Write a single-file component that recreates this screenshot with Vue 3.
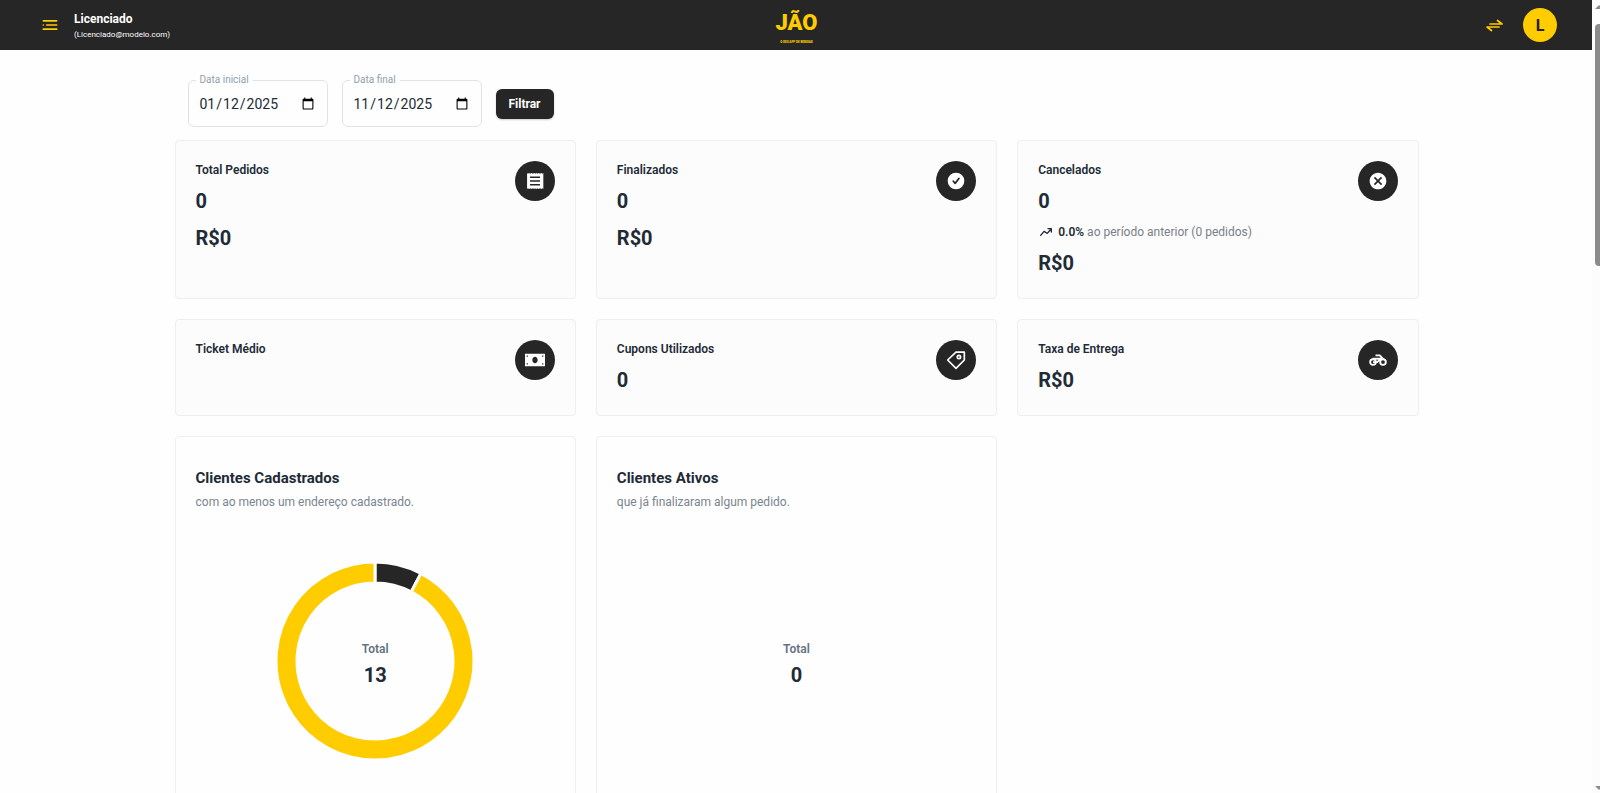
<script setup>
import { ref } from 'vue';

const startDate = ref('2025-01-12');
const endDate = ref('2025-11-12');

const stats = [
    { title: 'Total Pedidos', count: '0', amount: 'R$0', icon: 'receipt' },
    { title: 'Finalizados', count: '0', amount: 'R$0', icon: 'check' },
    { title: 'Cancelados', count: '0', trend: '0.0%', trendText: 'ao período anterior (0 pedidos)', amount: 'R$0', icon: 'cancel' },
    { title: 'Ticket Médio', icon: 'money' },
    { title: 'Cupons Utilizados', count: '0', icon: 'tag' },
    { title: 'Taxa de Entrega', amount: 'R$0', icon: 'bike' }
];

const charts = [
    { title: 'Clientes Cadastrados', subtitle: 'com ao menos um endereço cadastrado.', series: [{ value: 1, color: '#262626' }, { value: 12, color: '#ffcc00' }] },
    { title: 'Clientes Ativos', subtitle: 'que já finalizaram algum pedido.', series: [] }
];

const total = (series) => series.reduce((sum, item) => sum + item.value, 0);

const point = (radius, angle) => `${100 + radius * Math.sin(angle)} ${100 - radius * Math.cos(angle)}`;

// donut slices, clockwise from the top
const slices = (series) => {
    const sum = total(series);
    let angle = 0;
    return series.map((item) => {
        const start = angle;
        const end = start + (item.value / sum) * Math.PI * 2;
        const large = end - start > Math.PI ? 1 : 0;
        angle = end;
        return {
            color: item.color,
            d: `M${point(99, start)} A99 99 0 ${large} 1 ${point(99, end)} L${point(78, end)} A78 78 0 ${large} 0 ${point(78, start)} Z`
        };
    });
};
</script>

<template>
    <div class="app">
        <header class="topbar">
            <div class="account">
                <button class="icon-button" type="button" aria-label="Menu">
                    <svg width="20" height="20" viewBox="0 0 24 24" fill="currentColor">
                        <circle cx="4" cy="12" r="1" />
                        <rect x="7" y="11" width="14" height="2" rx="1" />
                        <rect x="3" y="16" width="18" height="2" rx="1" />
                        <rect x="3" y="6" width="18" height="2" rx="1" />
                    </svg>
                </button>
                <div>
                    <div class="name">Licenciado</div>
                    <div class="email">(Licenciado@modelo.com)</div>
                </div>
            </div>
            <div class="logo">
                <span class="logo-name">JÃO</span>
                <span class="logo-tag">O SEU APP DE BEBIDAS</span>
            </div>
            <div class="actions">
                <button class="icon-button" type="button" aria-label="Trocar">
                    <svg width="20" height="20" viewBox="0 0 20 20" fill="none" stroke="currentColor" stroke-width="1.7" stroke-linecap="round" stroke-linejoin="round">
                        <path d="M5 9h12l-4.500-3.500" />
                        <path d="M14 12H2l4.500 3.500" />
                    </svg>
                </button>
                <button class="avatar" type="button">L</button>
            </div>
        </header>

        <main class="content">
            <form class="filters" @submit.prevent>
                <div class="field">
                    <label for="start">Data inicial</label>
                    <input id="start" v-model="startDate" type="date">
                </div>
                <div class="field">
                    <label for="end">Data final</label>
                    <input id="end" v-model="endDate" type="date">
                </div>
                <button class="filter-button" type="submit">Filtrar</button>
            </form>

            <div class="grid">
                <section v-for="stat in stats" :key="stat.title" class="card">
                    <div class="stat">
                        <h2 class="stat-title">{{ stat.title }}</h2>
                        <div v-if="stat.count" class="value">{{ stat.count }}</div>
                        <div v-if="stat.trend" class="trend">
                            <svg width="16" height="16" viewBox="0 0 24 24" fill="currentColor">
                                <path d="M21 7a1 1 0 0 0-1-1h-5a1 1 0 0 0 0 2h2.83l-4 4.71-4.32-2.57a1 1 0 0 0-1.28.22l-5 6a1 1 0 0 0 .13 1.41A1 1 0 0 0 4 18a1 1 0 0 0 .77-.36l4.45-5.34 4.27 2.56a1 1 0 0 0 1.27-.21L19 9.7V12a1 1 0 0 0 2 0V7z" />
                            </svg>
                            <span><strong>{{ stat.trend }}</strong> {{ stat.trendText }}</span>
                        </div>
                        <div v-if="stat.amount" class="value">{{ stat.amount }}</div>
                    </div>
                    <div class="badge">
                        <svg width="20" height="20" viewBox="0 0 24 24" fill="currentColor">
                            <path v-if="stat.icon === 'receipt'" d="M18 17.500H6v-2h12v2zm0-4.500H6v-2h12v2zm0-4.500H6v-2h12v2zM2.500 21.500l1-.7 1.500.7 1.500-.7 1.500.7 1.500-.7 1.500.7 1-.7 1.500.7 1.500-.7 1.500.7 1.500-.7 1.500.7 1.500-.7 1 .7V2.500l-1 .7-1.500-.7-1.500.7-1.500-.7-1.500.7-1.500-.7-1 .7-1.500-.7-1.500.7-1.500-.7-1.500.7-1.500-.7-1.500.7-1-.7z" />
                            <path v-else-if="stat.icon === 'check'" fill-rule="evenodd" d="M12 2a10 10 0 1 0 0 20 10 10 0 0 0 0-20zm4.3 7.6-4.6 6a1 1 0 0 1-1.5 0l-2.4-2.9a1 1 0 0 1 1.5-1.3l1.6 1.9 3.8-5a1 1 0 0 1 1.6 1.3z" />
                            <path v-else-if="stat.icon === 'cancel'" d="M12 2C6.47 2 2 6.47 2 12s4.47 10 10 10 10-4.47 10-10S17.53 2 12 2zm5 13.59L15.59 17 12 13.41 8.41 17 7 15.59 10.59 12 7 8.41 8.41 7 12 10.59 15.59 7 17 8.41 13.41 12 17 15.59z" />
                            <path v-else-if="stat.icon === 'money'" fill-rule="evenodd" d="M0 4.500h24v15H0zM12 8c-1.800 0-3.200 1.800-3.200 4s1.400 4 3.200 4 3.200-1.800 3.200-4-1.400-4-3.200-4zM2 6.500V8h1.500V6.500zM20.500 6.500V8H22V6.500zM2 16v1.500h1.500V16zM20.500 16v1.500H22V16z" />
                            <g v-else-if="stat.icon === 'tag'" fill="none" stroke="currentColor" stroke-width="2">
                                <path d="M12 2.500h10V12L12 22 2 12z" stroke-linejoin="round" />
                                <circle cx="15.500" cy="8.500" r="2" />
                            </g>
                            <g v-else fill="none" stroke="currentColor" stroke-width="2.200">
                                <circle cx="6" cy="14.500" r="3.400" />
                                <circle cx="18" cy="14.500" r="3.400" />
                                <path d="M9 6.500h5l4.500 4.500M5.500 10.500h10L11 14.500H6" />
                            </g>
                        </svg>
                    </div>
                </section>

                <section v-for="chart in charts" :key="chart.title" class="card chart-card">
                    <h2 class="chart-title">{{ chart.title }}</h2>
                    <p class="chart-subtitle">{{ chart.subtitle }}</p>
                    <div class="donut">
                        <svg width="200" height="200" viewBox="0 0 200 200">
                            <path v-for="slice in slices(chart.series)" :key="slice.color" :d="slice.d" :fill="slice.color" stroke="#fefefe" stroke-width="3" />
                        </svg>
                        <div class="donut-label">
                            <span class="donut-text">Total</span>
                            <span class="value">{{ total(chart.series) }}</span>
                        </div>
                    </div>
                </section>
            </div>
        </main>

        <div class="scrollbar">
            <svg width="8" height="24" viewBox="0 0 8 24" fill="#8b8b8b"><path d="M3 9h8L7 5z" /></svg>
            <div class="thumb"></div>
            <svg class="down" width="8" height="12" viewBox="0 0 8 12" fill="#8b8b8b"><path d="M3 5h8L7 9z" /></svg>
        </div>
    </div>
</template>

<style>
body {
    margin: 0;
    background: #fefefe;
}
</style>

<style scoped>
.app {
    box-sizing: border-box;
    height: 100vh;
    padding-right: 7px;
    overflow: hidden;
    color: #212b36;
    font-family: Roboto, sans-serif;
    font-size: 12px;
    line-height: 18px;
}

.topbar {
    display: grid;
    grid-template-columns: 1fr auto 1fr;
    align-items: center;
    height: 50px;
    padding: 0 36px;
    background: #262626;
    color: #fff;
}

.account,
.actions {
    display: flex;
    align-items: center;
}

.account {
    gap: 14px;
    padding-left: 4px;
}

.actions {
    justify-content: flex-end;
    gap: 18px;
}

.icon-button {
    display: flex;
    padding: 0;
    border: 0;
    background: none;
    color: #ffcc00;
}

.name {
    padding-top: 2px;
    font-weight: bold;
    line-height: 18px;
}

.email {
    font-size: 8px;
    line-height: 14px;
}

.logo {
    display: flex;
    flex-direction: column;
    align-items: center;
    color: #ffcc00;
    font-weight: 900;
}

.logo-name {
    font-family: "Liberation Sans Narrow", Roboto, sans-serif;
    font-size: 22px;
    line-height: 34px;
}

.logo-tag {
    font-size: 3px;
    line-height: 4px;
}

.avatar {
    width: 34px;
    height: 34px;
    padding: 0;
    border: 0;
    border-radius: 50%;
    background: #ffcc00;
    color: #212121;
    font-family: inherit;
    font-size: 16px;
    font-weight: bold;
}

.content {
    max-width: 1244px;
    margin: 0 auto;
    padding-top: 30px;
}

.filters {
    display: flex;
    align-items: center;
    gap: 14px;
    padding: 0 13px;
    margin-bottom: 13px;
}

.field {
    position: relative;
}

.field label {
    position: absolute;
    top: -7px;
    left: 8px;
    padding: 0 4px;
    background: #fefefe;
    color: #919eab;
    font-size: 10px;
    line-height: 14px;
}

.field input {
    box-sizing: border-box;
    width: 140px;
    height: 47px;
    padding: 0 10px;
    border: 1px solid #dfe3e8;
    border-radius: 6px;
    background: transparent;
    color: #212b36;
    font-family: inherit;
    font-size: 14px;
}

.filter-button {
    height: 30px;
    padding: 0 13px;
    border: 0;
    border-radius: 6px;
    background: #262626;
    box-shadow: 0 1px 2px rgba(0, 0, 0, 0.2);
    color: #fff;
    font-family: inherit;
    font-size: 12px;
    font-weight: bold;
}

.grid {
    display: grid;
    grid-template-columns: repeat(3, 1fr);
    gap: 20px;
}

.card {
    display: flex;
    justify-content: space-between;
    padding: 20px;
    border: 1px solid #efefef;
    border-radius: 4px;
    background: #fcfcfc;
}

.stat {
    display: flex;
    flex-direction: column;
    gap: 7px;
    min-height: 55px;
}

.stat-title {
    margin: 0;
    font-size: 12px;
    font-weight: 600;
}

.value {
    font-size: 20px;
    font-weight: bold;
    line-height: 30px;
}

.trend {
    display: flex;
    align-items: center;
    gap: 4px;
    color: #7a8087;
}

.trend svg,
.trend strong {
    color: #212b36;
    font-weight: 600;
}

.badge {
    display: flex;
    align-items: center;
    justify-content: center;
    width: 40px;
    height: 40px;
    border-radius: 50%;
    background: #262626;
    color: #fff;
}

.chart-card {
    flex-direction: column;
    justify-content: flex-start;
    min-height: 400px;
    background: #fefefe;
}

.chart-title {
    margin: 9px 0 0;
    font-size: 15px;
    font-weight: bold;
    line-height: 24px;
}

.chart-subtitle {
    margin: 3px 0 0;
    color: #7a858f;
}

.donut {
    display: grid;
    place-items: center;
    margin-top: 50px;
}

.donut svg,
.donut-label {
    grid-area: 1 / 1;
}

.donut-label {
    display: flex;
    flex-direction: column;
    align-items: center;
    gap: 2px;
    padding-top: 8px;
}

.donut-text {
    color: #637381;
    font-weight: 600;
}

.scrollbar {
    position: fixed;
    top: 0;
    right: 0;
    bottom: 0;
    display: flex;
    flex-direction: column;
    width: 8px;
    overflow: hidden;
    background: #fcfcfc;
}

.thumb {
    height: 242px;
    margin-left: 3px;
    border-radius: 4px 0 0 4px;
    background: #8b8b8b;
}

.down {
    margin-top: auto;
}
</style>
